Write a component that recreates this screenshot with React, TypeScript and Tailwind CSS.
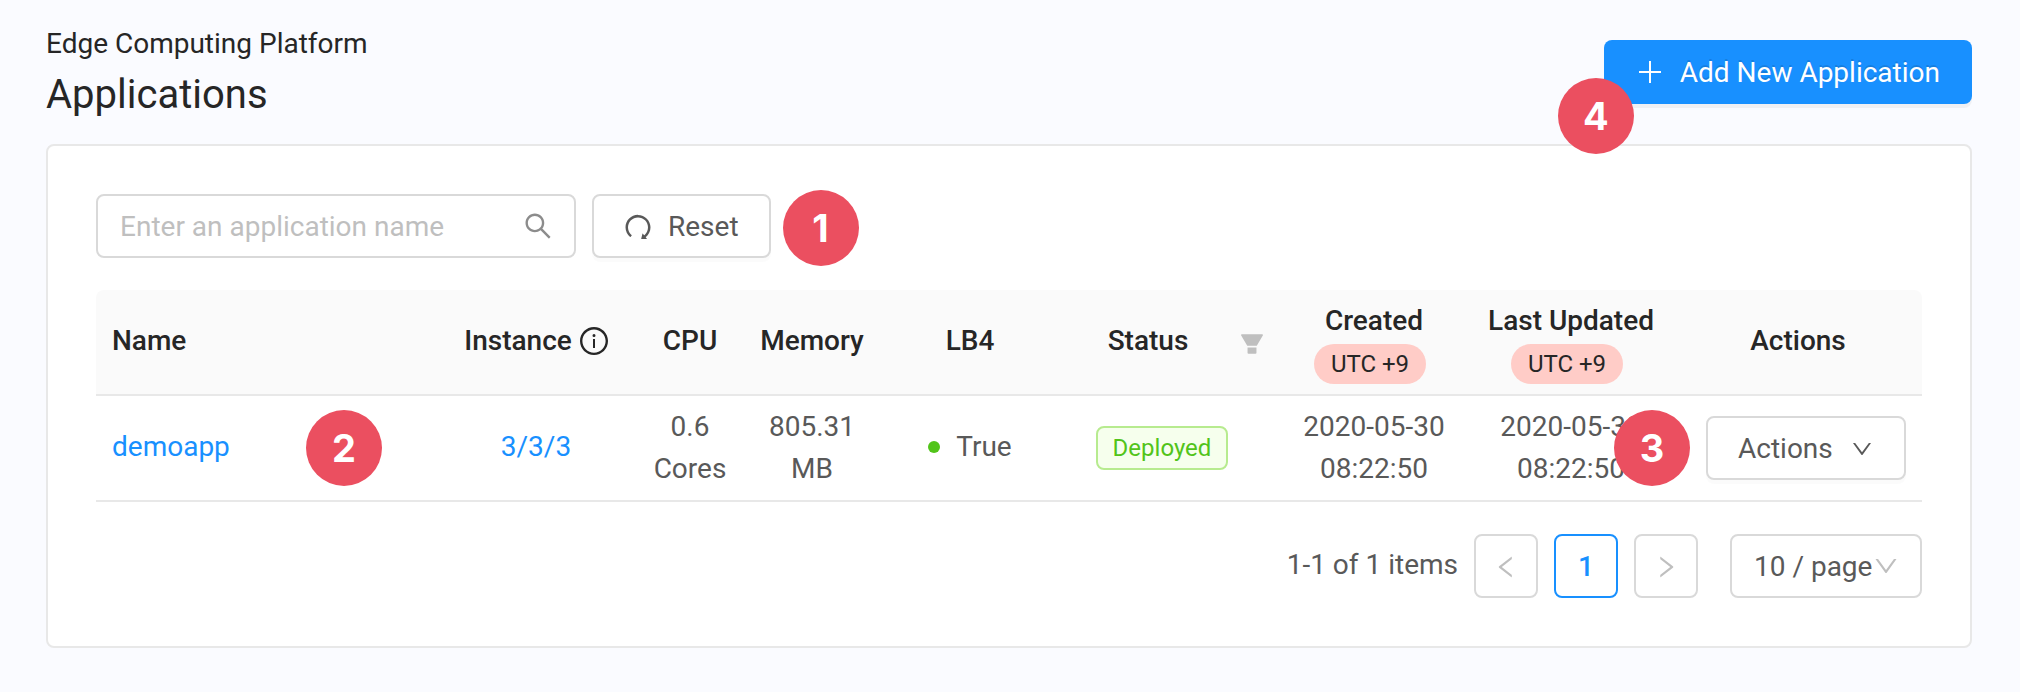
import type { ReactNode } from "react";
import {
  AiFillFilter,
  AiOutlineDown,
  AiOutlineInfoCircle,
  AiOutlineLeft,
  AiOutlineRedo,
  AiOutlineRight,
  AiOutlineSearch,
} from "react-icons/ai";

function Marker({ n, className }: { n: number; className: string }) {
  return (
    <span
      className={`absolute z-10 flex size-[76px] items-center justify-center rounded-full bg-[#eb4f60] font-['Inter',sans-serif] text-[38px] leading-none font-bold text-white ${className}`}
    >
      {n}
    </span>
  );
}

function UtcBadge() {
  return (
    <span className="mr-2 rounded-full bg-[#ffccc7] px-[17px] text-2xl leading-10 font-normal text-[#262626]">
      UTC +9
    </span>
  );
}

function PageButton({ label, active, children }: { label: string; active?: boolean; children: ReactNode }) {
  return (
    <button
      type="button"
      aria-label={label}
      className={`flex size-16 items-center justify-center rounded-lg border-2 bg-white pt-0.5 font-medium ${
        active ? "border-[#1890ff] text-[#1890ff]" : "border-[#d9d9d9] text-[#bfbfbf]"
      }`}
    >
      {children}
    </button>
  );
}

const outlineButton =
  "flex h-16 items-center rounded-lg border-2 border-[#d9d9d9] bg-white pt-0.5 shadow-[0_4px_0_rgba(0,0,0,0.015)]";

export default function App() {
  return (
    <div className="min-h-screen bg-[#fafbff] px-[46px] pt-[21px] pb-11 font-['Roboto',sans-serif] text-[28px] leading-[42px] text-[#595959]">
      <header className="mr-0.5 mb-[19px] flex items-start justify-between text-[#262626]">
        <div className="pt-0.5">
          <p>Edge Computing Platform</p>
          <h1 className="text-[40px] leading-[60px]">Applications</h1>
        </div>
        <div className="relative mt-[19px]">
          <button
            type="button"
            className="flex h-16 items-center gap-4 rounded-lg bg-[#1890ff] px-8 text-white shadow-[0_4px_0_rgba(0,0,0,0.045)] [text-shadow:0_-2px_0_rgba(0,0,0,0.12)]"
          >
            <svg viewBox="0 0 28 28" className="size-7" stroke="currentColor" strokeWidth="2" aria-hidden="true">
              <path d="M3 14h22M14 3v22" />
            </svg>
            <span className="pt-0.5">Add New Application</span>
          </button>
          <Marker n={4} className="top-[38px] -left-[46px]" />
        </div>
      </header>

      <main className="mr-0.5 rounded-lg border-2 border-[#e8e8e8] bg-white p-12">
        <div className="mb-8 flex gap-4">
          <div className="relative w-[480px]">
            <input
              type="text"
              aria-label="Application name"
              placeholder="Enter an application name"
              className="h-16 w-full rounded-lg border-2 border-[#d9d9d9] pr-15 pl-[22px] placeholder:text-[#bfbfbf]"
            />
            <AiOutlineSearch className="absolute top-4 right-[22px] size-8 text-[#8c8c8c]" />
          </div>
          <div className="relative">
            <button type="button" className={`${outlineButton} gap-3.5 pr-[30px] pl-7`}>
              <AiOutlineRedo className="size-8" />
              Reset
            </button>
            <Marker n={1} className="-top-1 left-full ml-3" />
          </div>
        </div>

        <table className="w-full table-fixed border-separate border-spacing-0 text-center">
          <colgroup>
            <col />
            <col className="w-[204px]" />
            <col className="w-[104px]" />
            <col className="w-[140px]" />
            <col className="w-[176px]" />
            <col className="w-[208px]" />
            <col className="w-[216px]" />
            <col className="w-[178px]" />
            <col className="w-[262px]" />
          </colgroup>
          <thead>
            <tr className="h-[106px] text-[#262626] *:border-b-2 *:border-[#e8e8e8] *:bg-[#fafafa] *:pb-0.5 *:font-medium">
              <th className="rounded-tl-lg pl-4 text-left">Name</th>
              <th className="pl-0.5">
                <span className="flex items-center justify-center gap-1.5">
                  Instance
                  <AiOutlineInfoCircle className="size-8" />
                </span>
              </th>
              <th>CPU</th>
              <th>Memory</th>
              <th>LB4</th>
              <th className="relative pr-7">
                Status
                <button type="button" aria-label="Filter by status" className="absolute top-10 right-0 text-[#bfbfbf]">
                  <AiFillFilter className="size-7" />
                </button>
              </th>
              <th className="pt-0.5">
                <span className="flex flex-col items-center gap-0.5">
                  Created
                  <UtcBadge />
                </span>
              </th>
              <th className="pt-0.5">
                <span className="flex flex-col items-center gap-0.5 whitespace-nowrap">
                  Last Updated
                  <UtcBadge />
                </span>
              </th>
              <th className="rounded-tr-lg pr-8 pl-[46px]">Actions</th>
            </tr>
          </thead>
          <tbody>
            <tr className="h-[106px] *:border-b-2 *:border-[#e8e8e8]">
              <td className="relative pb-0.5 pl-4 text-left">
                <a href="#demoapp" className="text-[#1890ff]">
                  demoapp
                </a>
                <Marker n={2} className="top-3.5 left-[210px]" />
              </td>
              <td className="pb-0.5">
                <a href="#instances" className="text-[#1890ff]">
                  3/3/3
                </a>
              </td>
              <td>
                0.6
                <br />
                Cores
              </td>
              <td>
                805.31
                <br />
                MB
              </td>
              <td className="pb-0.5">
                <span className="flex items-center justify-center gap-4">
                  <span className="size-3 rounded-full bg-[#52c41a]" />
                  True
                </span>
              </td>
              <td>
                <span className="inline-block rounded-lg border-2 border-[#b7eb8f] bg-[#f6ffed] px-[15px] align-middle text-2xl leading-10 text-[#52c41a]">
                  Deployed
                </span>
              </td>
              <td>
                2020-05-30
                <br />
                08:22:50
              </td>
              <td>
                2020-05-30
                <br />
                08:22:50
              </td>
              <td className="relative pr-4 pl-[46px]">
                <button type="button" className={`${outlineButton} w-full justify-between px-[30px]`}>
                  Actions
                  <AiOutlineDown className="size-6" />
                </button>
                <Marker n={3} className="top-3.5 -left-[46px]" />
              </td>
            </tr>
          </tbody>
        </table>

        <nav aria-label="Pagination" className="mt-8 flex items-center justify-end gap-4">
          <span className="pb-0.5">1-1 of 1 items</span>
          <PageButton label="Previous page">
            <AiOutlineLeft className="size-7" />
          </PageButton>
          <PageButton label="Page 1" active>
            1
          </PageButton>
          <PageButton label="Next page">
            <AiOutlineRight className="size-7" />
          </PageButton>
          <div className="relative ml-4">
            <select
              aria-label="Page size"
              className="h-16 w-48 appearance-none rounded-lg border-2 border-[#d9d9d9] bg-white pt-0.5 pl-[22px]"
            >
              <option>10 / page</option>
            </select>
            <AiOutlineDown className="pointer-events-none absolute top-[18px] right-[22px] size-7 text-[#bfbfbf]" />
          </div>
        </nav>
      </main>
    </div>
  );
}
